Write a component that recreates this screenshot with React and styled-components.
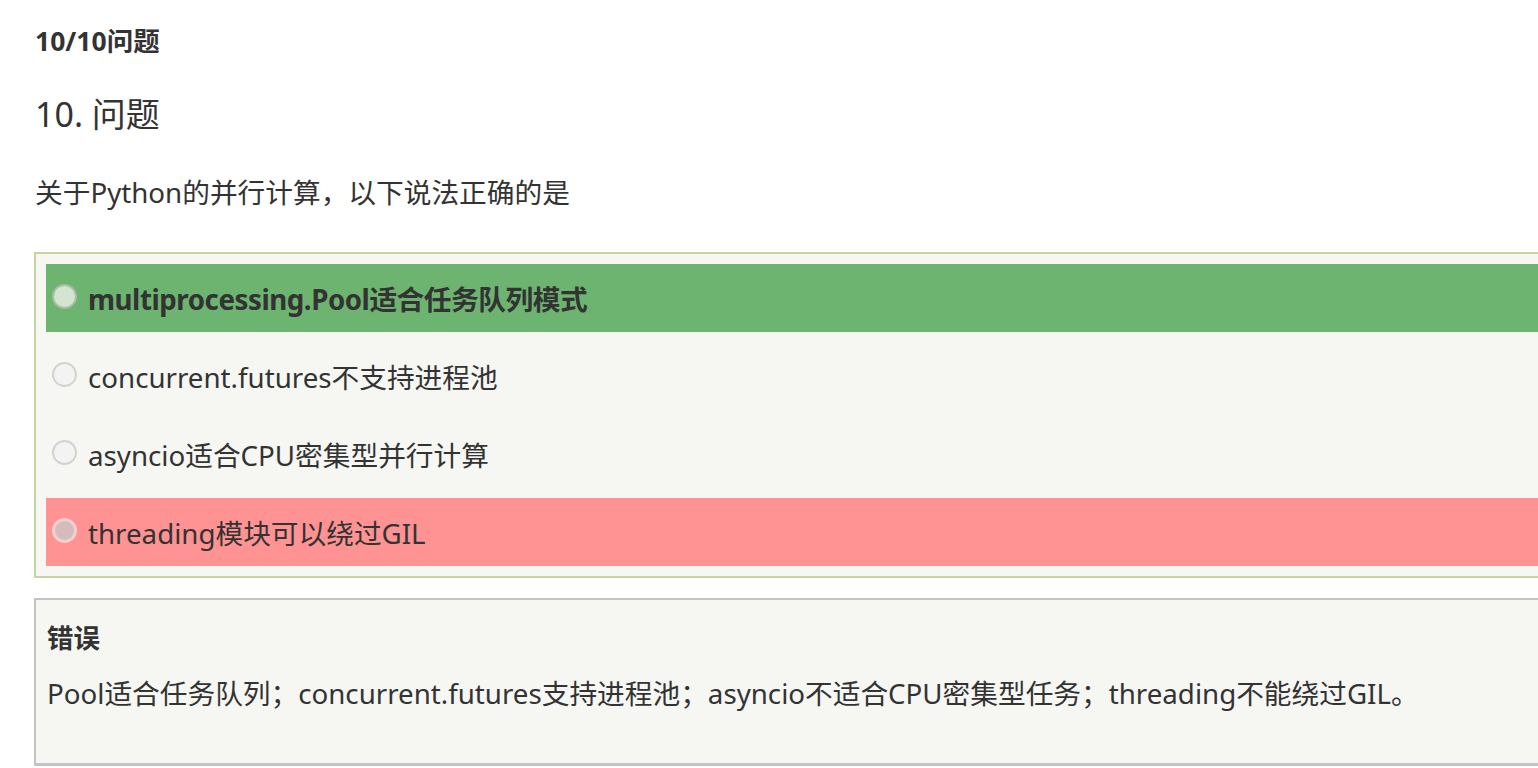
import styled, { createGlobalStyle } from "styled-components";

const GlobalStyle = createGlobalStyle`
  html, body {
    margin: 0;
    padding: 0;
    background: #fff;
    overflow: hidden;
  }
  body {
    font-family: "Noto Sans", "Noto Sans CJK SC", sans-serif;
    color: #333;
  }
`;

const Page = styled.div`
  width: 1580px;
  padding-left: 34px;
`;

const Progress = styled.div`
  margin: 21px 0 0 1px;
  font-size: 26.5px;
  line-height: 40px;
  font-weight: 700;
  color: #333;
`;

const Heading = styled.h2`
  margin: 31px 0 0 1px;
  font-size: 34px;
  line-height: 44px;
  font-weight: 400;
  color: #333;
`;

const Question = styled.p`
  margin: 36px 0 0 1px;
  font-size: 27.7px;
  line-height: 40px;
  color: #333;
`;

const Options = styled.div`
  margin-top: 40px;
  border: 2px solid #c6d4a2;
  background: #f6f7f3;
  padding: 10px 0 10px 10px;
  display: flex;
  flex-direction: column;
  gap: 10px;
`;

const rowColors = {
  correct: "#6db470",
  wrong: "#ff9292",
  none: "transparent",
};

const Row = styled.label`
  display: flex;
  align-items: center;
  height: 68px;
  padding-left: 6px;
  background: ${(p) => rowColors[p.$state]};
  font-size: 27.7px;
  font-weight: ${(p) => (p.$state === "correct" ? 700 : 400)};
  letter-spacing: ${(p) => (p.$state === "correct" ? "-0.45px" : "0")};
  color: #333;
`;

const radioStyles = {
  correct: "background: #d3e4d1; border: 2px solid #a9bea7;",
  wrong: "background: #d4bbbc; border: 3px solid #f4cfcf;",
  none: "background: #f3f3f3; border: 2px solid #d2d2d2;",
};

const Radio = styled.span`
  box-sizing: border-box;
  width: 25px;
  height: 25px;
  border-radius: 50%;
  flex-shrink: 0;
  margin-right: 11px;
  margin-top: -4px;
  ${(p) => radioStyles[p.$state]}
`;

const Feedback = styled.div`
  margin-top: 20px;
  border: 2px solid #c4c4c4;
  border-bottom-width: 3px;
  background: #f6f7f3;
  min-height: 168px;
  box-sizing: border-box;
  padding: 18px 11px 0;
`;

const FeedbackTitle = styled.div`
  font-size: 26.5px;
  line-height: 40px;
  font-weight: 700;
  color: #333;
`;

const FeedbackText = styled.div`
  margin-top: 15px;
  font-size: 27.7px;
  line-height: 40px;
  color: #333;
`;

const options = [
  { text: "multiprocessing.Pool适合任务队列模式", state: "correct" },
  { text: "concurrent.futures不支持进程池", state: "none" },
  { text: "asyncio适合CPU密集型并行计算", state: "none" },
  { text: "threading模块可以绕过GIL", state: "wrong" },
];

export default function App() {
  return (
    <>
      <GlobalStyle />
      <Page>
        <Progress>10/10问题</Progress>
        <Heading>10. 问题</Heading>
        <Question>关于Python的并行计算，以下说法正确的是</Question>
        <Options>
          {options.map((o) => (
            <Row key={o.text} $state={o.state}>
              <Radio $state={o.state} />
              {o.text}
            </Row>
          ))}
        </Options>
        <Feedback>
          <FeedbackTitle>错误</FeedbackTitle>
          <FeedbackText>
            Pool适合任务队列；concurrent.futures支持进程池；asyncio不适合CPU密集型任务；threading不能绕过GIL。
          </FeedbackText>
        </Feedback>
      </Page>
    </>
  );
}
